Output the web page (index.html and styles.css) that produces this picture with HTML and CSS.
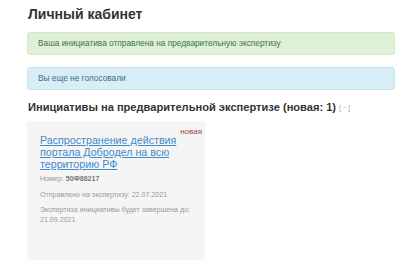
FILE: index.html
```html
<!DOCTYPE html>
<html lang="ru">
<head>
<meta charset="utf-8">
<link rel="stylesheet" href="styles.css">
</head>
<body>
<div class="page">
  <h1 class="title">Личный кабинет</h1>
  <div class="alert alert-success">Ваша инициатива отправлена на предварительную экспертизу</div>
  <div class="alert alert-info">Вы еще не голосовали</div>
  <h3 class="section">Инициативы на предварительной экспертизе (новая: 1) <span class="toggle">[ − ]</span></h3>
  <div class="cards">
    <div class="card">
      <div class="card-head">
        <a class="card-link" href="#">Распространение действия портала Добродел на всю территорию РФ</a>
        <span class="badge-new">новая</span>
      </div>
      <p class="meta meta-first">Номер: <b>50Ф86217</b></p>
      <p class="meta">Отправлено на экспертизу: 22.07.2021</p>
      <p class="meta">Экспертиза инициативы будет завершена до: 21.09.2021</p>
    </div>
  </div>
</div>
</body>
</html>
```
FILE: styles.css
```css
html, body {
  margin: 0;
  padding: 0;
  background: #fff;
}
body {
  font-family: "Liberation Sans", Arial, sans-serif;
  color: #333;
}
.page {
  padding: 0 5px 0 27px;
}
.title {
  margin: 0;
  padding: 4px 0 0 1px;
  font-size: 14px;
  line-height: 20px;
  font-weight: bold;
  color: #333;
}
.alert {
  border-radius: 3px;
  font-size: 8.3px;
  line-height: 11px;
  padding: 5px 10px;
  border: 1px solid transparent;
}
.alert-success {
  margin-top: 8px;
  background: #dff0d8;
  border-color: #d6e9c6;
  color: #3c763d;
}
.alert-info {
  margin-top: 12px;
  background: #d9edf7;
  border-color: #bce8f1;
  color: #31708f;
}
.section {
  margin: 9px 0 0 1px;
  font-size: 11.1px;
  line-height: 16px;
  font-weight: bold;
  color: #333;
}
.toggle {
  font-size: 6.5px;
  font-weight: normal;
  color: #999;
  vertical-align: middle;
}
.cards {
  margin-top: 5px;
  display: flex;
}
.card {
  width: 178px;
  box-sizing: border-box;
  height: 139px;
  background: #f5f5f5;
  border-radius: 2px;
  padding: 13px 3px 0 13px;
}
.card-head {
  display: flex;
  justify-content: space-between;
  align-items: flex-start;
}
.card-link {
  width: 140px;
  font-size: 10.7px;
  line-height: 12px;
  color: #428bca;
  text-decoration: underline;
}
.badge-new {
  font-size: 8px;
  line-height: 10px;
  color: #a94442;
  margin-top: -7px;
}
.meta {
  margin: 5px 0 0 0;
  font-size: 7.1px;
  line-height: 10px;
  color: #999;
}
.meta-first {
  margin-top: 4px;
}
.meta + .meta {
  margin-top: 6px;
}
.meta + .meta + .meta {
  margin-top: 5px;
}
.meta b {
  color: #777;
}
```
